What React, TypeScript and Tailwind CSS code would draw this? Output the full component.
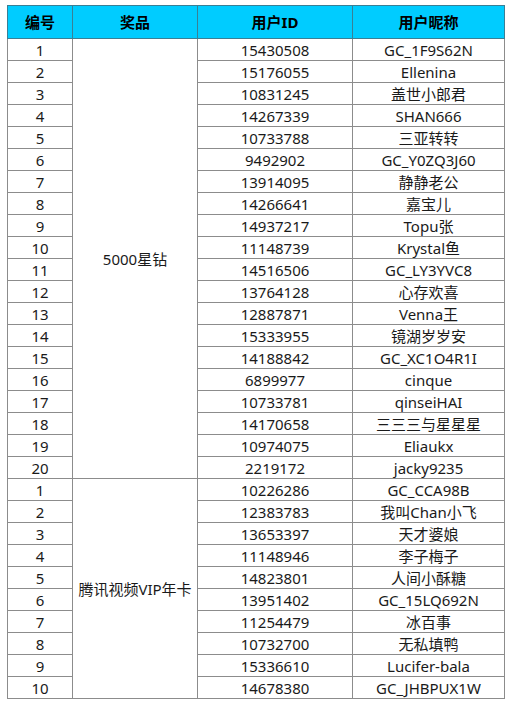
const FIRST = [
  ["15430508", "GC_1F9S62N"],
  ["15176055", "Ellenina"],
  ["10831245", "盖世小郎君"],
  ["14267339", "SHAN666"],
  ["10733788", "三亚转转"],
  ["9492902", "GC_Y0ZQ3J60"],
  ["13914095", "静静老公"],
  ["14266641", "嘉宝儿"],
  ["14937217", "Topu张"],
  ["11148739", "Krystal鱼"],
  ["14516506", "GC_LY3YVC8"],
  ["13764128", "心存欢喜"],
  ["12887871", "Venna王"],
  ["15333955", "镜湖岁岁安"],
  ["14188842", "GC_XC1O4R1I"],
  ["6899977", "cinque"],
  ["10733781", "qinseiHAI"],
  ["14170658", "三三三与星星星"],
  ["10974075", "Eliaukx"],
  ["2219172", "jacky9235"],
];

const SECOND = [
  ["10226286", "GC_CCA98B"],
  ["12383783", "我叫Chan小飞"],
  ["13653397", "天才婆娘"],
  ["11148946", "李子梅子"],
  ["14823801", "人间小酥糖"],
  ["13951402", "GC_15LQ692N"],
  ["11254479", "冰百事"],
  ["10732700", "无私填鸭"],
  ["15336610", "Lucifer-bala"],
  ["14678380", "GC_JHBPUX1W"],
];

const GROUPS = [
  { prize: "5000星钻", rows: FIRST },
  { prize: "腾讯视频VIP年卡", rows: SECOND },
];

const cell = "border border-[#8c8c8c] p-0 text-center align-middle whitespace-nowrap";

export default function App() {
  return (
    <div
      className="min-h-screen bg-white pl-[7px] pt-[5px] text-[15px] text-[#1a1a1a]"
      style={{ fontFamily: '"Noto Sans", "Noto Sans CJK SC", sans-serif' }}
    >
      <table className="w-[497px] table-fixed border-collapse">
        <colgroup>
          <col className="w-[65px]" />
          <col className="w-[125px]" />
          <col className="w-[155px]" />
          <col className="w-[152px]" />
        </colgroup>
        <thead>
          <tr className="h-[33px] bg-[#00ccff] font-bold text-black">
            <th className="border border-[#3a7f95] text-center">编号</th>
            <th className="border border-[#3a7f95] text-center">奖品</th>
            <th className="border border-[#3a7f95] text-center">用户ID</th>
            <th className="border border-[#3a7f95] text-center">用户昵称</th>
          </tr>
        </thead>
        <tbody>
          {GROUPS.map((g) =>
            g.rows.map(([id, name], i) => (
              <tr key={g.prize + id} className="h-[22px] leading-[20px]">
                <td className={cell}>{i + 1}</td>
                {i === 0 && (
                  <td className={cell} rowSpan={g.rows.length}>
                    {g.prize}
                  </td>
                )}
                <td className={cell}>{id}</td>
                <td className={cell}>{name}</td>
              </tr>
            ))
          )}
        </tbody>
      </table>
    </div>
  );
}
